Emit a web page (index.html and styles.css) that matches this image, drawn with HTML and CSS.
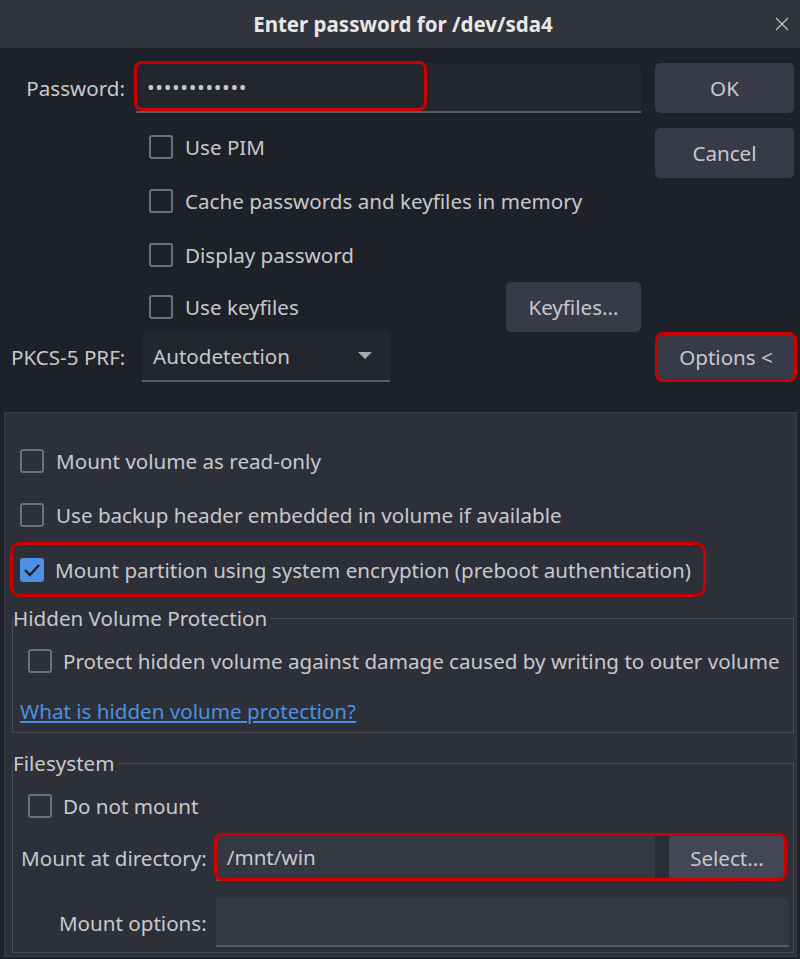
FILE: index.html
```html
<!DOCTYPE html>
<html lang="en">
<head>
  <meta charset="UTF-8" />
  <title>Enter password for /dev/sda4</title>
  <link rel="stylesheet" href="styles.css">
</head>
<body>

  <header class="titlebar">
    <span class="title">Enter password for /dev/sda4</span>
    <svg class="close" width="14" height="14" viewBox="0 0 14 14">
      <path d="M1 1 L13 13 M13 1 L1 13" stroke="#c3c4c8" stroke-width="1.3" fill="none" />
    </svg>
  </header>

  <section class="top">
    <div class="main-col">
      <div class="field-row">
        <span class="field-label">Password:</span>
        <div class="field">
          <input type="password" class="text-input pass-input" value="abcdefghijkl" />
          <span class="mark mark-pass"></span>
        </div>
      </div>

      <div class="checks">
        <label class="check-row"><span class="box"></span>Use PIM</label>
        <label class="check-row"><span class="box"></span>Cache passwords and keyfiles in memory</label>
        <label class="check-row"><span class="box"></span>Display password</label>
        <div class="check-row short">
          <label class="check-inline"><span class="box"></span>Use keyfiles</label>
          <button class="btn btn-keyfiles">Keyfiles...</button>
        </div>
      </div>

      <div class="prf-row">
        <span class="prf-label">PKCS-5 PRF:</span>
        <div class="combo">
          <span>Autodetection</span>
          <svg width="14" height="8" viewBox="0 0 14 8"><path d="M0 0 H14 L7 7 Z" fill="#a9abb0" /></svg>
        </div>
      </div>
    </div>

    <div class="side-col">
      <button class="btn">OK</button>
      <button class="btn btn-cancel">Cancel</button>
      <button class="btn btn-options">Options &lt;</button>
    </div>
  </section>

  <section class="options">
    <label class="check-row"><span class="box"></span>Mount volume as read-only</label>
    <label class="check-row"><span class="box"></span>Use backup header embedded in volume if available</label>
    <label class="check-row marked">
      <span class="box checked">
        <svg width="18" height="14" viewBox="0 0 18 14"><path d="M2 7 L7 12 L16 2" stroke="#22242b" stroke-width="2.4" fill="none" /></svg>
      </span>Mount partition using system encryption (preboot authentication)
    </label>

    <fieldset class="group">
      <legend>Hidden Volume Protection</legend>
      <label class="check-row inner"><span class="box"></span>Protect hidden volume against damage caused by writing to outer volume</label>
      <div class="link-row"><a href="#">What is hidden volume protection?</a></div>
    </fieldset>

    <fieldset class="group group-fs">
      <legend>Filesystem</legend>
      <label class="check-row inner"><span class="box"></span>Do not mount</label>
      <div class="fs-grid">
        <span class="fs-label">Mount at directory:</span>
        <div class="dir-box">
          <input type="text" class="text-input dir-input" value="/mnt/win" />
          <span class="dir-gap"></span>
          <button class="btn btn-select">Select...</button>
          <span class="mark mark-dir"></span>
        </div>
        <span class="fs-label">Mount options:</span>
        <input type="text" class="text-input opt-input" value="" />
      </div>
    </fieldset>
  </section>

</body>
</html>
```

FILE: styles.css
```css
body {
  margin: 0;
  background: #1f2128;
  color: #c7c8cc;
  font-family: 'Noto Sans', 'DejaVu Sans', sans-serif;
  font-size: 20.6px;
  overflow: hidden;
}

/* Title bar */
.titlebar {
  height: 48px;
  background: #32343c;
  display: flex;
  align-items: center;
  justify-content: center;
  position: relative;
}
.title {
  font-weight: bold;
  font-size: 20.5px;
  color: #e6e7e9;
  margin-left: 6px;
}
.close {
  position: absolute;
  right: 11px;
  top: 17px;
}

/* Top part */
.top {
  display: flex;
  padding-top: 15px;
}
.main-col {
  width: 641px;
}
.side-col {
  width: 139px;
  margin-left: 14px;
  display: flex;
  flex-direction: column;
}

.btn {
  height: 50px;
  border: none;
  border-radius: 5px;
  background: #383a48;
  color: #c7c8cc;
  font-family: inherit;
  font-size: 20.6px;
  padding: 0;
}
.btn-cancel {
  margin-top: 15px;
}
.btn-options {
  margin-top: auto;
  width: 142px;
  border: 3px solid #cc0000;
  border-radius: 8px;
}

.field-row {
  display: flex;
  height: 50px;
}
.field-label {
  width: 136px;
  box-sizing: border-box;
  padding-right: 11px;
  text-align: right;
  line-height: 50px;
}
.field {
  position: relative;
  width: 505px;
}
.text-input {
  width: 100%;
  height: 100%;
  box-sizing: border-box;
  background: #24262d;
  border: none;
  border-bottom: 2px solid #5a5c63;
  border-radius: 4px 4px 0 0;
  color: #c7c8cc;
  font-family: inherit;
  font-size: 20.6px;
  padding: 0 11px;
  outline: none;
}
.pass-input {
  letter-spacing: 0.6px;
}

/* red annotation frames lying over the fields */
.mark {
  position: absolute;
  border: 3px solid #cc0000;
  border-radius: 8px;
  box-sizing: border-box;
  pointer-events: none;
}
.mark-pass {
  left: -2px;
  top: -2px;
  width: 293px;
  height: 50px;
}

.checks {
  margin-top: 7px;
}
.check-row {
  display: flex;
  align-items: center;
  height: 54px;
  padding-left: 149px;
}
.check-row.short {
  height: 50px;
}
.check-inline {
  display: flex;
  align-items: center;
}
.btn-keyfiles {
  margin-left: auto;
  width: 135px;
}
.box {
  width: 24px;
  height: 24px;
  box-sizing: border-box;
  border: 2px solid #6e7077;
  border-radius: 3px;
  margin-right: 12px;
  flex-shrink: 0;
  display: flex;
  align-items: center;
  justify-content: center;
}
.box.checked {
  background: #4d8fe4;
  border-color: #4d8fe4;
}

.prf-row {
  display: flex;
  height: 50px;
  align-items: center;
}
.prf-label {
  width: 142px;
  box-sizing: border-box;
  padding-left: 11px;
}
.combo {
  width: 248px;
  height: 50px;
  box-sizing: border-box;
  background: #24262d;
  border-bottom: 2px solid #5a5c63;
  border-radius: 4px 4px 0 0;
  display: flex;
  align-items: center;
  justify-content: space-between;
  padding: 0 18px 0 11px;
}

/* Options panel */
.options {
  margin: 30px 3px 0 4px;
  background: #2e3039;
  border: 1px solid #3b3d46;
  padding: 21px 2px 0 7px;
}
.options > .check-row {
  padding-left: 8px;
}
.options > .check-row.marked {
  width: fit-content;
  height: 55px;
  box-sizing: border-box;
  margin-left: -2px;
  padding: 0 12px 0 7px;
  border: 3px solid #cc0000;
  border-radius: 10px;
}
.options > .check-row.marked .box {
  margin-right: 11px;
}

.group {
  margin: 8px 0 0;
  padding: 0;
  border: 1px solid #4a4c55;
  min-width: 0;
}
.group legend {
  padding: 0 4px 0 0;
  line-height: 26px;
}
.group .check-row.inner {
  padding-left: 15px;
  margin-top: 3px;
}
.group .check-row.inner .box {
  margin-right: 11px;
}
.link-row {
  height: 42px;
  line-height: 42px;
  margin-top: 2px;
  padding-left: 7px;
}
.link-row a {
  color: #4a90e0;
}

.group-fs {
  margin-top: 17px;
  margin-bottom: 3px;
}
.fs-grid {
  display: grid;
  grid-template-columns: auto 1fr;
  column-gap: 9px;
  row-gap: 17px;
  align-items: center;
  padding: 2px 4px 5px 8px;
}
.fs-label {
  justify-self: end;
}
.dir-box {
  position: relative;
  display: flex;
  height: 46px;
  margin-right: 4px;
}
.dir-input {
  flex: 1;
  background: #353743;
}
.dir-gap {
  width: 14px;
  background: #2b2d35;
}
.btn-select {
  width: 116px;
  height: 46px;
  background: #434654;
  border-radius: 5px;
}
.mark-dir {
  left: -2px;
  top: -2px;
  right: -2px;
  bottom: 0;
}
.opt-input {
  height: 49px;
  background: #353743;
}
```
